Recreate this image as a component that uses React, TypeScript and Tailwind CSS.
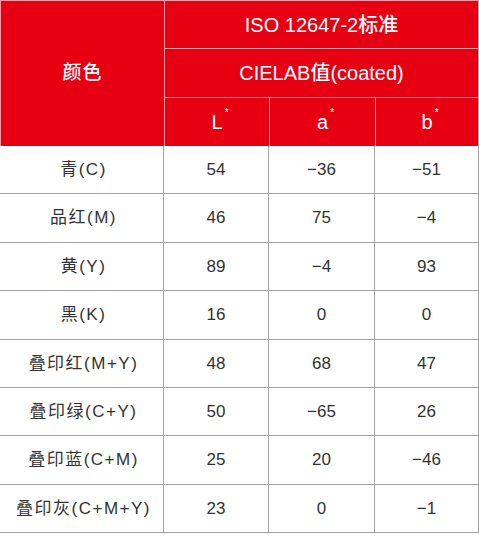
const rows = [
  { name: "青(C)", l: "54", a: "−36", b: "−51", h: "h-[48px]" },
  { name: "品红(M)", l: "46", a: "75", b: "−4", h: "h-[49px]" },
  { name: "黄(Y)", l: "89", a: "−4", b: "93", h: "h-[48px]" },
  { name: "黑(K)", l: "16", a: "0", b: "0", h: "h-[49px]" },
  { name: "叠印红(M+Y)", l: "48", a: "68", b: "47", h: "h-[48px]" },
  { name: "叠印绿(C+Y)", l: "50", a: "−65", b: "26", h: "h-[48px]" },
  { name: "叠印蓝(C+M)", l: "25", a: "20", b: "−46", h: "h-[49px]" },
  { name: "叠印灰(C+M+Y)", l: "23", a: "0", b: "−1", h: "h-[48px]" },
];

const font = {
  fontFamily: '"Liberation Sans", "Noto Sans CJK SC", sans-serif',
};

function Star({ ch }: { ch: string }) {
  return (
    <span className="relative">
      {ch}
      <span className="absolute -right-[6px] -top-[2px] text-[10px]">*</span>
    </span>
  );
}

export default function App() {
  return (
    <div className="w-[479px] h-[537px] bg-white" style={font}>
      {/* header */}
      <div className="grid grid-cols-[164px_1fr] bg-[#e60012] text-white border-t border-l border-[#f39aa0]">
        <div className="flex items-center justify-center border-r border-[#f39aa0] text-[19px] font-medium tracking-[1px]">
          颜色
        </div>
        <div className="flex flex-col border-r border-[#f39aa0]">
          <div className="h-[48px] flex items-center justify-center border-b border-[#f39aa0] text-[20px] font-medium">
            ISO 12647-2标准
          </div>
          <div className="h-[49px] flex items-center justify-center border-b border-[#f39aa0] text-[20px] font-medium">
            CIELAB值(coated)
          </div>
          <div className="h-[48px] grid grid-cols-[105px_106px_1fr] text-[20px]">
            <div className="flex items-center justify-center border-r border-[#f39aa0]">
              <Star ch="L" />
            </div>
            <div className="flex items-center justify-center border-r border-[#f39aa0]">
              <Star ch="a" />
            </div>
            <div className="flex items-center justify-center">
              <Star ch="b" />
            </div>
          </div>
        </div>
      </div>
      {/* body */}
      {rows.map((r) => (
        <div
          key={r.name}
          className={`grid grid-cols-[164px_105px_106px_104px] border-b border-[#a3a3a3] text-[17px] text-[#333333] ${r.h}`}
        >
          <div className="flex items-center justify-center border-r border-[#a3a3a3] pl-[4px] tracking-[1.5px]">
            {r.name}
          </div>
          <div className="flex items-center justify-center border-r border-[#a3a3a3]">
            {r.l}
          </div>
          <div className="flex items-center justify-center border-r border-[#a3a3a3]">
            {r.a}
          </div>
          <div className="flex items-center justify-center border-r border-[#a3a3a3]">
            {r.b}
          </div>
        </div>
      ))}
    </div>
  );
}
